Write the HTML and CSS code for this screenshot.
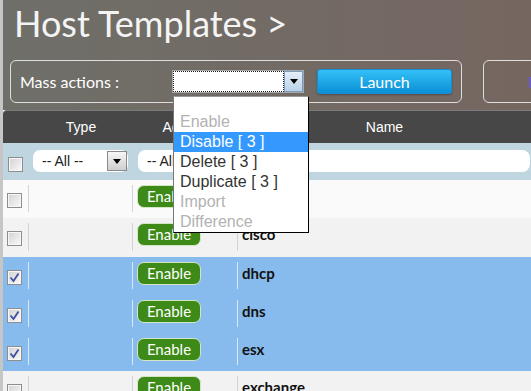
FILE: index.html
```html
<!DOCTYPE html>
<html lang="en">
<head>
    <meta charset="UTF-8">
    <title>Host Templates</title>
    <link rel="stylesheet" href="styles.css">
</head>
<body>
    <div class="page">
        <div class="top">
            <h1 class="title">Host Templates &gt;</h1>

            <!-- toolbar -->
            <div class="toolbar">
                <div class="mass">
                    <span class="mass-label">Mass actions :</span>
                    <div class="combo">
                        <div class="combo-field"></div>
                        <div class="combo-btn"><i class="tri"></i></div>
                        <ul class="dropdown">
                            <li class="blank"></li>
                            <li class="off">Enable</li>
                            <li class="hover">Disable [ 3 ]</li>
                            <li>Delete [ 3 ]</li>
                            <li>Duplicate [ 3 ]</li>
                            <li class="off">Import</li>
                            <li class="off">Difference</li>
                        </ul>
                    </div>
                    <button class="launch">Launch</button>
                </div>
                <div class="other"><span class="other-mark"></span></div>
            </div>
        </div>

        <!-- list -->
        <div class="list">
            <div class="row head">
                <div class="cell"></div>
                <div class="cell">Type</div>
                <div class="cell">Actions</div>
                <div class="cell">Name</div>
            </div>
            <div class="row filters">
                <div class="cell"><span class="check"></span></div>
                <div class="cell"><div class="pick">-- All --<span class="pick-btn"><i class="tri"></i></span></div></div>
                <div class="cell"><div class="pick">-- All --<span class="pick-btn"><i class="tri"></i></span></div></div>
                <div class="cell"><div class="search"></div></div>
            </div>

            <div class="row odd">
                <div class="cell"><span class="check"></span></div>
                <div class="cell"></div>
                <div class="cell"><span class="enable">Enable</span></div>
                <div class="cell name"></div>
            </div>
            <div class="row even">
                <div class="cell"><span class="check"></span></div>
                <div class="cell"></div>
                <div class="cell"><span class="enable">Enable</span></div>
                <div class="cell name">cisco</div>
            </div>
            <div class="row sel">
                <div class="cell"><span class="check on"><svg viewBox="0 0 13 13"><path d="M2.5 6.5 L5.5 10 L10.5 2.5"/></svg></span></div>
                <div class="cell"></div>
                <div class="cell"><span class="enable">Enable</span></div>
                <div class="cell name">dhcp</div>
            </div>
            <div class="row sel">
                <div class="cell"><span class="check on"><svg viewBox="0 0 13 13"><path d="M2.5 6.5 L5.5 10 L10.5 2.5"/></svg></span></div>
                <div class="cell"></div>
                <div class="cell"><span class="enable">Enable</span></div>
                <div class="cell name">dns</div>
            </div>
            <div class="row sel">
                <div class="cell"><span class="check on"><svg viewBox="0 0 13 13"><path d="M2.5 6.5 L5.5 10 L10.5 2.5"/></svg></span></div>
                <div class="cell"></div>
                <div class="cell"><span class="enable">Enable</span></div>
                <div class="cell name">esx</div>
            </div>
            <div class="row even">
                <div class="cell"><span class="check"></span></div>
                <div class="cell"></div>
                <div class="cell"><span class="enable">Enable</span></div>
                <div class="cell name">exchange</div>
            </div>
        </div>
    </div>
</body>
</html>
```

FILE: styles.css
```css
html, body {
    margin: 0;
    height: 100%;
    overflow: hidden;
    background-color: #fafafa;
}

.page {
    width: 528px;
    height: 100%;
    overflow: hidden;
    border-left: 3px solid #c6c6c6;
}

.top {
    height: 110px;
    background: linear-gradient(to right, #6f6f69, #766660);
}

.title {
    margin: 0;
    padding: 2px 0 0 11px;
    font-family: Lato, sans-serif;
    font-size: 36px;
    font-weight: 400;
    line-height: 43px;
    color: #f4f4f4;
}

.toolbar {
    display: flex;
    margin-top: 15px;
    padding-left: 7px;
}

.mass {
    display: flex;
    flex: none;
    align-items: center;
    box-sizing: border-box;
    width: 452px;
    height: 43px;
    padding: 0 9px;
    border: 1px solid #dedede;
    border-radius: 6px;
}

.mass-label {
    width: 152px;
    font-family: Lato, sans-serif;
    font-size: 16px;
    color: #fff;
}

.combo {
    position: relative;
    z-index: 10;
    display: flex;
    box-sizing: border-box;
    width: 132px;
    height: 23px;
    border: 1px solid #a9a9a9;
    background-color: #fff;
}

.combo-field {
    flex: 1;
    border: 1px dotted #222;
}

.combo-btn {
    display: flex;
    align-items: center;
    justify-content: center;
    width: 17px;
    border: 1px solid #7a9cc2;
    background: linear-gradient(#e4eef8, #b8d2ea);
}

.tri {
    width: 0;
    height: 0;
    border-left: 4px solid transparent;
    border-right: 4px solid transparent;
    border-top: 5px solid #000;
}

.dropdown {
    position: absolute;
    top: 25px;
    left: 0;
    box-sizing: border-box;
    width: 136px;
    margin: 0;
    padding: 0;
    list-style: none;
    background-color: #fff;
    border: 1px solid #000;
    border-left-color: #767676;
    border-top-color: #9a9a9a;
    font-family: "Liberation Sans", Arial, sans-serif;
    font-size: 16px;
    color: #333;
}

.dropdown li {
    height: 20px;
    line-height: 20px;
    padding-left: 6px;
    white-space: nowrap;
}

.dropdown li.blank {
    height: 15px;
}

.dropdown li.off {
    color: #b2b2b2;
}

.dropdown li.hover {
    background-color: #3399ff;
    color: #fff;
}

.launch {
    flex: none;
    box-sizing: border-box;
    width: 135px;
    height: 25px;
    margin-left: 13px;
    padding: 0;
    border: 1px solid #1b8bd2;
    border-radius: 3px;
    background: linear-gradient(#33c0f6, #0a90d6);
    box-shadow: 0 1px 2px rgba(0,0,0,0.3);
    font-family: Lato, sans-serif;
    font-size: 16px;
    color: #fff;
}

.other {
    flex: none;
    box-sizing: border-box;
    width: 100px;
    height: 43px;
    margin-left: 21px;
    border: 1px solid #dedede;
    border-radius: 6px;
}

.other-mark {
    display: block;
    width: 4px;
    height: 11px;
    margin: 16px 0 0 45px;
    background-color: #6a58cc;
}

.list {
    font-family: "Liberation Sans", Arial, sans-serif;
}

.row {
    display: grid;
    grid-template-columns: 26px 104px 105px 1fr;
}

.head {
    height: 33px;
    box-sizing: border-box;
    border-top: 1px solid #7a7a7a;
    border-top-left-radius: 4px;
    background-color: #474747;
    color: #fff;
    font-size: 14px;
    line-height: 32px;
    text-align: center;
}

.filters {
    height: 37px;
    background-color: #bfd5e0;
}

.filters .cell {
    padding-top: 7px;
}

.filters .cell:first-child {
    padding: 14px 0 0 5px;
}

.pick {
    position: relative;
    box-sizing: border-box;
    width: 95px;
    height: 22px;
    margin-left: 4px;
    padding-left: 9px;
    border-radius: 7px;
    background-color: #fff;
    font-size: 14px;
    line-height: 22px;
    color: #222;
}

.filters .cell:nth-child(3) .pick {
    margin-left: 5px;
}

.pick-btn {
    position: absolute;
    top: 1px;
    right: 1px;
    display: flex;
    align-items: center;
    justify-content: center;
    box-sizing: border-box;
    width: 20px;
    height: 20px;
    border: 1px solid #8a8a8a;
    background: linear-gradient(#f6f6f6, #cfcfcf);
}

.search {
    height: 22px;
    margin: 0 1px 0 5px;
    border-radius: 8px;
    background-color: #fff;
}

.odd {
    height: 38.25px;
    background-color: #fafafa;
}

.even {
    height: 38.25px;
    background-color: #f2f2f2;
}

.sel {
    height: 38.25px;
    background-color: #87bbed;
}

.odd .cell, .even .cell, .sel .cell {
    margin: 5px 0 6px;
    border-right: 1px solid #d4d4d4;
}

.sel .cell {
    border-right-color: #dbe8f5;
}

.odd .cell:first-child, .even .cell:first-child, .sel .cell:first-child {
    padding: 8px 0 0 4px;
}

.odd .cell:nth-child(3), .even .cell:nth-child(3), .sel .cell:nth-child(3) {
    padding-left: 4px;
}

.name {
    padding-left: 4px;
    border-right: none !important;
    font-family: Lato, sans-serif;
    font-size: 15px;
    font-weight: 700;
    line-height: 22px;
    color: #111;
}

.check {
    display: block;
    box-sizing: border-box;
    width: 15px;
    height: 15px;
    border: 1px solid #8e8e8e;
    box-shadow: inset 0 0 0 1px #f6f6f6;
    background: linear-gradient(135deg, #d2d2d2, #fafafa);
}

.check svg {
    display: block;
    width: 13px;
    height: 13px;
}

.check path {
    fill: none;
    stroke: #3c4fa0;
    stroke-width: 1.8;
}

.enable {
    display: block;
    box-sizing: border-box;
    width: 64px;
    height: 23px;
    border: 1px solid #d3e6c4;
    border-radius: 7px;
    background-color: #3e8a18;
    font-family: Lato, sans-serif;
    font-size: 15px;
    line-height: 21px;
    text-align: center;
    color: #fff;
}
```
